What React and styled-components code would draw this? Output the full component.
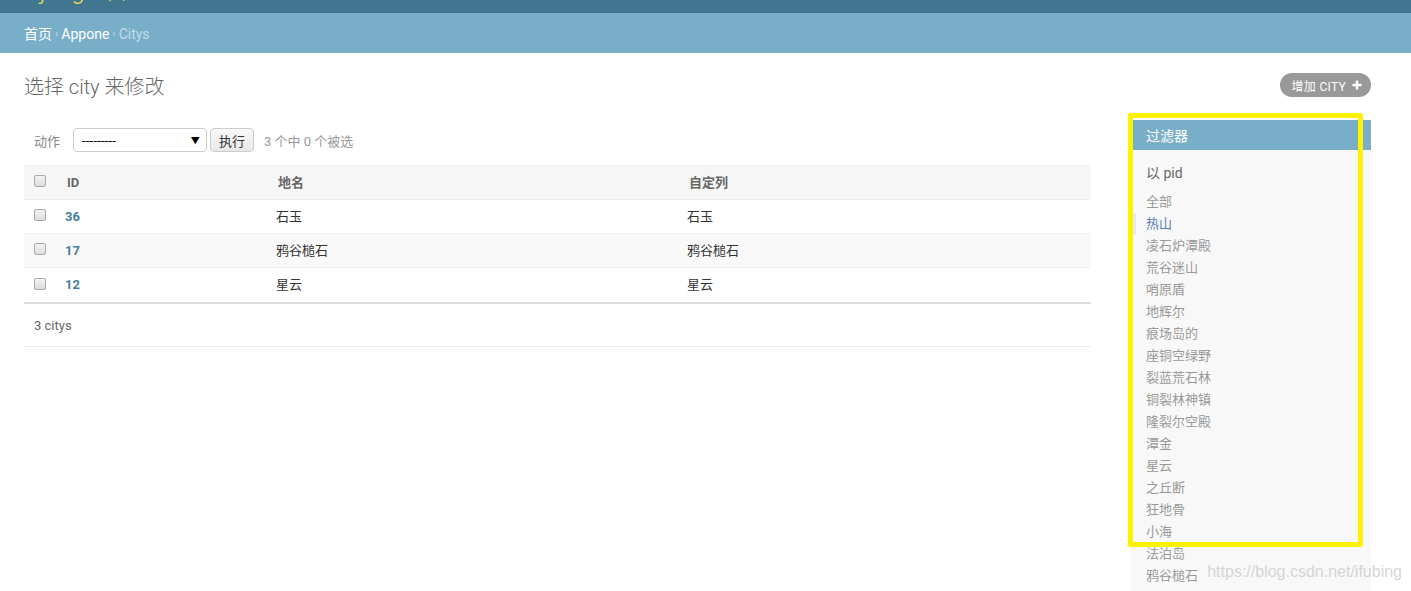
import React from 'react';
import styled, { createGlobalStyle } from 'styled-components';

const GlobalStyle = createGlobalStyle`
    html, body {
        margin: 0;
        padding: 0;
        overflow: hidden;
        background: #ffffff;
    }
    body {
        font-family: Roboto, 'Noto Sans CJK SC', 'Liberation Sans', sans-serif;
        font-size: 14px;
        color: #333;
    }
`

const Page = styled.div`
    position: relative;
    width: 1411px;
    min-height: 591px;
`

const Header = styled.div`
    height: 13px;
    background: #417690;
    overflow: hidden;
    padding: 0 24px;
`

const Branding = styled.div`
    margin-top: -21px;
    font-size: 24px;
    line-height: 24px;
    font-weight: 300;
    color: #f5dd5d;
`

const Breadcrumbs = styled.div`
    display: flex;
    align-items: center;
    height: 40px;
    box-sizing: border-box;
    background: #79aec8;
    padding: 1px 24px 0;
    font-size: 14px;
    line-height: 20px;
    color: #ffffff;

    span.sep {
        font-size: 11px;
        color: #c4dce8;
        margin: 0 3px;
    }
    span.current {
        color: #c4dce8;
    }
`

const Content = styled.div`
    padding: 21px 40px 0 24px;
`

const TitleRow = styled.div`
    display: flex;
    justify-content: space-between;
    align-items: center;
    height: 26px;
`

const Title = styled.h1`
    margin: 0;
    font-size: 20px;
    line-height: 26px;
    font-weight: 300;
    color: #666;
`

const AddButton = styled.a`
    display: inline-flex;
    align-items: center;
    gap: 6px;
    height: 24px;
    padding: 0 9px 0 12px;
    border-radius: 15px;
    background: #999;
    color: #fff;
    font-size: 12px;
    letter-spacing: 0.3px;
    text-transform: uppercase;
    box-sizing: border-box;
    margin-top: -4px;
`

const Body = styled.div`
    display: flex;
    gap: 40px;
    margin-top: 20px;
`

const Main = styled.div`
    flex: 1;
    padding-top: 8px;
`

const Actions = styled.div`
    display: flex;
    align-items: center;
    height: 24px;
    padding-left: 10px;
    font-size: 13px;
    color: #888;
`

const Label = styled.span`
    margin-right: 13px;
`

const Select = styled.div`
    display: flex;
    align-items: center;
    justify-content: space-between;
    width: 134px;
    height: 24px;
    box-sizing: border-box;
    border: 1px solid #ccc;
    border-radius: 4px;
    padding: 0 6px 0 8px;
    font-size: 13px;
    letter-spacing: 0.2px;
    color: #000;
    background: #fff;

    i {
        font-style: normal;
        font-size: 9px;
    }
`

const GoButton = styled.button`
    margin-left: 3px;
    height: 24px;
    width: 44px;
    border: 1px solid #ccc;
    border-radius: 4px;
    background: linear-gradient(#fafafa, #e8e8e8);
    font-family: inherit;
    font-size: 13px;
    color: #333;
    padding: 0;
`

const Counter = styled.span`
    margin-left: 10px;
    color: #999;
`

const Table = styled.div`
    margin-top: 13px;
    display: grid;
    grid-template-columns: 33px 211px 411px 1fr;
    grid-auto-rows: 34px;
    border-top: 1px solid #eee;
    border-bottom: 2px solid #ddd;
`

const Cell = styled.div`
    display: flex;
    align-items: center;
    height: 34px;
    box-sizing: border-box;
    padding-left: ${p => (p.$check ? '10px' : p.$head ? '10px' : '8px')};
    background: ${p => (p.$head ? '#f6f6f6' : p.$alt ? '#f9f9f9' : '#fff')};
    border-bottom: ${p => (p.$last ? 'none' : '1px solid #eee')};
    font-size: 13px;
    line-height: 16px;
    color: ${p => (p.$head ? '#666' : p.$link ? '#447e9b' : '#333')};
    font-weight: ${p => (p.$head || p.$link ? 700 : 400)};
`

const Check = styled.span`
    display: block;
    width: 12px;
    height: 12px;
    box-sizing: border-box;
    border: 1px solid #aaa;
    border-radius: 2px;
    background: linear-gradient(#f4f4f4, #dcdcdc);
    margin-top: -3px;
`

const Paginator = styled.div`
    height: 42px;
    display: flex;
    align-items: center;
    padding-left: 10px;
    font-size: 13px;
    color: #666;
    border-bottom: 1px solid #eee;
`

const Filter = styled.div`
    width: 240px;
    background: #f8f8f8;
    padding-bottom: 40px;
`

const FilterTitle = styled.h2`
    margin: 0;
    height: 30px;
    line-height: 32px;
    padding: 0 15px;
    background: #79aec8;
    color: #fff;
    font-size: 14px;
    font-weight: 400;
`

const FilterBy = styled.h3`
    margin: 13px 0 8px;
    padding: 0 15px;
    font-size: 14px;
    line-height: 20px;
    font-weight: 400;
    color: #666;
`

const FilterList = styled.ul`
    list-style: none;
    margin: 0;
    padding: 0;
`

const FilterItem = styled.li`
    font-size: 13px;
    line-height: 22px;
    padding-left: ${p => (p.$selected ? '10px' : '15px')};
    border-left: ${p => (p.$selected ? '5px solid #eaeaea' : 'none')};
    color: ${p => (p.$selected ? '#5b80b2' : '#999')};
`

const Highlight = styled.div`
    position: absolute;
    left: 1128px;
    top: 113px;
    width: 235px;
    height: 434px;
    box-sizing: border-box;
    border: 5px solid #fff200;
    border-radius: 2px;
    pointer-events: none;
`

const Watermark = styled.div`
    position: absolute;
    right: 9px;
    top: 562px;
    font-family: 'Liberation Sans', Arial, sans-serif;
    font-size: 16px;
    line-height: 20px;
    color: rgba(200, 200, 200, 0.75);
`

const rows = [
    { id: 36, name: '石玉' },
    { id: 17, name: '鸦谷槌石' },
    { id: 12, name: '星云' },
]

const places = [
    '热山', '凌石炉潭殿', '荒谷迷山', '哨原盾', '地辉尔', '痕场岛的', '座铜空绿野',
    '裂蓝荒石林', '铜裂林神镇', '隆裂尔空殿', '潭金', '星云', '之丘断', '狂地骨',
    '小海', '法泊岛', '鸦谷槌石',
]

function Plus() {
    return (
        <svg width="10" height="10" viewBox="0 0 10 10">
            <path d="M5 0.5v9M0.5 5h9" stroke="#fff" strokeWidth="2.4" />
        </svg>
    );
}

export default function App() {
    return (
        <Page>
            <GlobalStyle />
            <Header>
                <Branding>Django 管理</Branding>
            </Header>
            <Breadcrumbs>
                首页<span className="sep">›</span>Appone<span className="sep">›</span>
                <span className="current">Citys</span>
            </Breadcrumbs>
            <Content>
                <TitleRow>
                    <Title>选择 city 来修改</Title>
                    <AddButton>增加 city <Plus /></AddButton>
                </TitleRow>
                <Body>
                    <Main>
                        <Actions>
                            <Label>动作</Label>
                            <Select>---------<i>▼</i></Select>
                            <GoButton>执行</GoButton>
                            <Counter>3 个中 0 个被选</Counter>
                        </Actions>
                        <Table>
                            <Cell $head $check><Check /></Cell>
                            <Cell $head>ID</Cell>
                            <Cell $head>地名</Cell>
                            <Cell $head>自定列</Cell>
                            {rows.map((r, i) => {
                                const alt = i % 2 === 1;
                                const last = i === rows.length - 1;
                                return (
                                    <React.Fragment key={r.id}>
                                        <Cell $check $alt={alt} $last={last}><Check /></Cell>
                                        <Cell $link $alt={alt} $last={last}>{r.id}</Cell>
                                        <Cell $alt={alt} $last={last}>{r.name}</Cell>
                                        <Cell $alt={alt} $last={last}>{r.name}</Cell>
                                    </React.Fragment>
                                );
                            })}
                        </Table>
                        <Paginator>3 citys</Paginator>
                    </Main>
                    <Filter>
                        <FilterTitle>过滤器</FilterTitle>
                        <FilterBy>以 pid</FilterBy>
                        <FilterList>
                            <FilterItem>全部</FilterItem>
                            {places.map((p, i) => (
                                <FilterItem key={p} $selected={i === 0}>{p}</FilterItem>
                            ))}
                        </FilterList>
                    </Filter>
                </Body>
            </Content>
            <Highlight />
            <Watermark>https://blog.csdn.net/ifubing</Watermark>
        </Page>
    );
}
